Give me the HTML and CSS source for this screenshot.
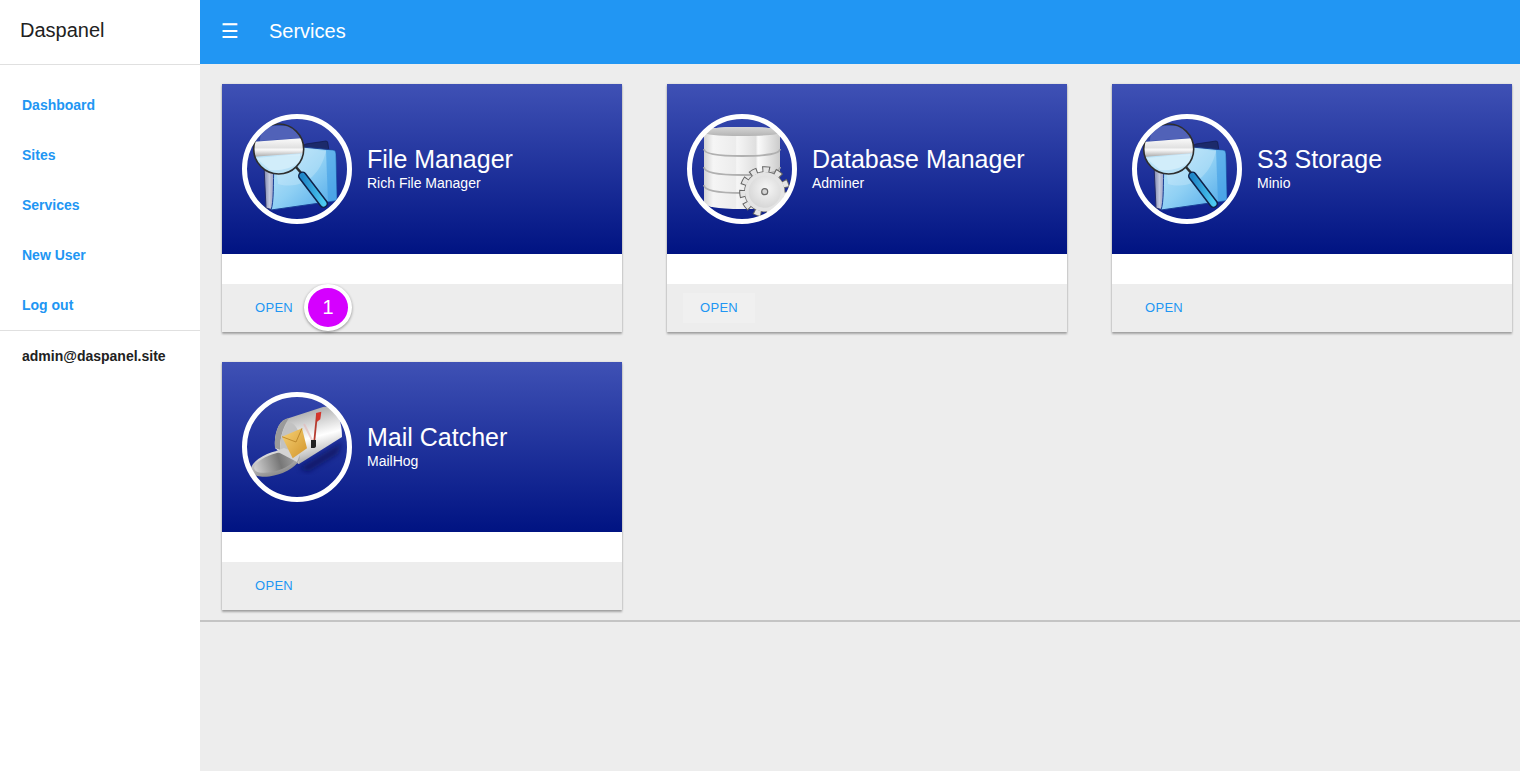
FILE: index.html
```html
<!DOCTYPE html>
<html lang="en">
<head>
<meta charset="utf-8">
<title>Services</title>
<link rel="stylesheet" href="styles.css">
</head>
<body>
<aside class="sidebar">
  <div class="brand">Daspanel</div>
  <nav class="nav">
    <a class="nav-link" href="#">Dashboard</a>
    <a class="nav-link" href="#">Sites</a>
    <a class="nav-link" href="#">Services</a>
    <a class="nav-link" href="#">New User</a>
    <a class="nav-link" href="#">Log out</a>
  </nav>
  <div class="user">admin@daspanel.site</div>
</aside>
<div class="main">
  <header class="topbar">
    <span class="burger">☰</span>
    <h1 class="page-title">Services</h1>
  </header>
  <section class="grid">
    <article class="card">
      <div class="card-head">
        <svg class="avatar" viewBox="0 0 110 110" width="110" height="110">
          <defs>
            <clipPath id="disc"><circle cx="55" cy="55" r="52"/></clipPath>
            <clipPath id="lens"><circle cx="36.7" cy="35" r="25"/></clipPath>
            <filter id="soft"><feGaussianBlur stdDeviation="2.5"/></filter>
            <linearGradient id="folder" x1="0" y1="0" x2="1" y2="1">
              <stop offset="0" stop-color="#c4e8fa"/><stop offset=".5" stop-color="#8fd0f4"/><stop offset="1" stop-color="#4aa5e8"/>
            </linearGradient>
            <linearGradient id="pages" x1="0" y1="0" x2="1" y2="0">
              <stop offset="0" stop-color="#7d83ad"/><stop offset=".5" stop-color="#c3c8dd"/><stop offset="1" stop-color="#8e94bb"/>
            </linearGradient>
            <linearGradient id="band" x1="0" y1="0" x2="0" y2="1">
              <stop offset="0" stop-color="#fbfbfb"/><stop offset=".5" stop-color="#e2e2e2"/><stop offset=".62" stop-color="#fafafa"/><stop offset="1" stop-color="#a8a8a8"/>
            </linearGradient>
            <linearGradient id="handle" x1="0" y1="0" x2="1" y2="0">
              <stop offset="0" stop-color="#1f86c8"/><stop offset="1" stop-color="#4cc8f0"/>
            </linearGradient>
            <linearGradient id="drum" x1="0" y1="0" x2="1" y2="0">
              <stop offset="0" stop-color="#d2d2d2"/><stop offset=".12" stop-color="#f5f5f5"/><stop offset=".42" stop-color="#ececec"/><stop offset=".43" stop-color="#f6f6f6"/><stop offset=".68" stop-color="#dfdfdf"/><stop offset=".71" stop-color="#fbfbfb"/><stop offset="1" stop-color="#cbcbcb"/>
            </linearGradient>
            <linearGradient id="drumtop" x1="0" y1="0" x2="0" y2="1">
              <stop offset="0" stop-color="#d6d6d6"/><stop offset="1" stop-color="#b4b4b4"/>
            </linearGradient>
            <radialGradient id="gearface" cx=".55" cy=".4" r=".7">
              <stop offset="0" stop-color="#f6f6f6"/><stop offset="1" stop-color="#d2d2d2"/>
            </radialGradient>
            <linearGradient id="box" x1=".35" y1="0" x2=".65" y2="1">
              <stop offset="0" stop-color="#9c9c9c"/><stop offset=".35" stop-color="#dcdcdc"/><stop offset=".55" stop-color="#ffffff"/><stop offset=".8" stop-color="#c8c8c8"/><stop offset="1" stop-color="#8d8d8d"/>
            </linearGradient>
            <linearGradient id="env" x1="0" y1="0" x2="1" y2="1">
              <stop offset="0" stop-color="#f7d276"/><stop offset="1" stop-color="#d2952b"/>
            </linearGradient>
            <linearGradient id="rim" x1="0" y1="0" x2="0" y2="1">
              <stop offset="0" stop-color="#dcdcdc"/><stop offset="1" stop-color="#8b8b8b"/>
            </linearGradient>
            <linearGradient id="tray" x1="0" y1="0" x2="1" y2="0">
              <stop offset="0" stop-color="#d2d2d2"/><stop offset=".6" stop-color="#777"/><stop offset="1" stop-color="#a5a5a5"/>
            </linearGradient>
            <g id="file-icon">
              <g clip-path="url(#disc)">
                <path d="M60 32 L64 30 L84 27 Q86 27 86 30 L87 37 L60 40Z" fill="#1c2a6b" stroke="#141d52" stroke-width=".8"/>
                <path d="M22 52 L33 52 L31 96 L24 94Z" fill="url(#pages)" stroke="#232b66" stroke-width="1"/>
                <path d="M29 96 C32 88 31 70 32 50 L60 33 L91 36 Q94 36 94 40 L95 84 Q95 87 92 87 Z" fill="url(#folder)" stroke="#1a3f96" stroke-width="1"/>
                <path d="M84 36 L91 36 Q94 36 94 40 L95 84 Q95 87 92 87 L86 88Z" fill="#3d9ae4" opacity=".55"/>
                <path d="M36 70 C58 76 78 64 84 37 L60 34 L34 52Z" fill="#def3fd" opacity=".3"/>
              </g>
              <path d="M54 53 L60 60" stroke="#2b2b2b" stroke-width="2.5"/>
              <path d="M60.5 62 L81.5 89.5" stroke="#0f2148" stroke-width="9" stroke-linecap="round"/>
              <path d="M60.5 62 L81.5 89.5" stroke="url(#handle)" stroke-width="6" stroke-linecap="round"/>
              <circle cx="36.7" cy="35" r="25" fill="#c4e4f6"/>
              <g clip-path="url(#lens)">
                <rect x="10" y="8" width="54" height="20" fill="#2f45a5"/>
                <path d="M18 27 Q18 13 32 12 H50 Q56 16 58 24Z" fill="#5162b8"/>
                <rect x="10" y="42" width="54" height="20" fill="#b9e2f7"/>
                <path d="M10 28 L62 24 V39 L10 43Z" fill="url(#band)"/>
                <path d="M14 44 L58 40 V48 Q44 58 28 56Z" fill="#e6f6fd" opacity=".55"/>
              </g>
              <circle cx="36.7" cy="35" r="25" fill="none" stroke="#2e2e2e" stroke-width="1.6"/>
            </g>
          </defs>
          <use href="#file-icon"/>
          <circle class="ring" cx="55" cy="55" r="52.5"/>
        </svg>
        <div class="card-text">
          <h2 class="card-title">File Manager</h2>
          <p class="card-sub">Rich File Manager</p>
        </div>
      </div>
      <div class="card-body"></div>
      <div class="card-actions">
        <a class="open-btn" href="#">Open</a>
        <span class="badge">1</span>
      </div>
    </article>

    <article class="card">
      <div class="card-head">
        <svg class="avatar" viewBox="0 0 110 110" width="110" height="110">
          <g clip-path="url(#disc)">
            <path d="M17 18 Q17 13 55 13 Q93 13 93 18 V88 Q93 95 55 95 Q17 95 17 88Z" fill="url(#drum)"/>
            <path d="M17 18 Q17 13 55 13 Q93 13 93 18 Q93 22 55 22 Q17 22 17 18Z" fill="url(#drumtop)"/>
            <path d="M17 35 Q17 42 55 42 Q93 42 93 35" class="db-line"/>
            <path d="M17 53 Q17 61 55 61 Q93 61 93 53" class="db-line"/>
            <path d="M17 71 Q17 79 55 79 Q93 79 93 71" class="db-line"/>
            <circle class="gear-teeth-dark" cx="77.7" cy="77.7" r="22"/>
            <circle class="gear-rim-dark" cx="77.7" cy="77.7" r="20.5"/>
            <circle class="gear-teeth" cx="77.7" cy="77.7" r="22"/>
            <circle class="gear-rim" cx="77.7" cy="77.7" r="19.8"/>
            <circle cx="77.7" cy="77.7" r="16" fill="url(#gearface)"/>
            <circle cx="77.7" cy="77.7" r="3" fill="#d4d4d4" stroke="#6a6a6a" stroke-width="1.2"/>
          </g>
          <circle class="ring" cx="55" cy="55" r="52.5"/>
        </svg>
        <div class="card-text">
          <h2 class="card-title">Database Manager</h2>
          <p class="card-sub">Adminer</p>
        </div>
      </div>
      <div class="card-body"></div>
      <div class="card-actions">
        <a class="open-btn open-btn-hover" href="#">Open</a>
      </div>
    </article>

    <article class="card">
      <div class="card-head">
        <svg class="avatar" viewBox="0 0 110 110" width="110" height="110">
          <use href="#file-icon"/>
          <circle class="ring" cx="55" cy="55" r="52.5"/>
        </svg>
        <div class="card-text">
          <h2 class="card-title">S3 Storage</h2>
          <p class="card-sub">Minio</p>
        </div>
      </div>
      <div class="card-body"></div>
      <div class="card-actions">
        <a class="open-btn" href="#">Open</a>
      </div>
    </article>

    <article class="card">
      <div class="card-head">
        <svg class="avatar" viewBox="0 0 110 110" width="110" height="110">
          <path d="M57 76 L100 50 L96 62 L66 80Z" fill="#07104f" opacity=".6" filter="url(#soft)"/>
          <path d="M33 56 C32 42 36 30 44 27 L81 15 C94 12 100 28 100 45 L57 72 L48 68Z" fill="url(#box)"/>
          <path d="M33 56 C32 42 36 30 44 27 L47 26 C43 32 38 42 38 58Z" fill="#9a9a9a"/>
          <path d="M38 58 C38 44 42 33 47 30 C53 31 57 38 58 46 L57 72 L50 66Z" fill="#c2c2c2"/>
          <ellipse cx="33.3" cy="71.3" rx="25.5" ry="11.5" fill="url(#rim)" transform="rotate(-18 33.3 71.3)"/>
          <ellipse cx="33.3" cy="70.3" rx="22" ry="8.5" fill="url(#tray)" transform="rotate(-18 33.3 70.3)"/>
          <path d="M34 59 L42 56 L58 62 L55 70Z" fill="#d4d4d4"/>
          <path d="M40 44.7 L60 36.3 L65 56.3 L50.7 66.3Z" fill="url(#env)"/>
          <path d="M40 44.7 L54 50 L60 36.3" fill="none" stroke="#b57f22" stroke-width=".8"/>
          <path d="M62 32 L71 50" stroke="#e3b8b8" stroke-width="2" opacity=".6"/>
          <path d="M72 52 L75 22" stroke="#b53b2f" stroke-width="1.8"/>
          <path d="M74 21 L79.3 19.7 L78.3 27.3 L75 29.7Z" fill="#d6342a"/>
          <path d="M69 48 H74 V54 Q74 56 71 56 H69Z" fill="#222"/>
          <circle class="ring" cx="55" cy="55" r="52.5"/>
        </svg>
        <div class="card-text">
          <h2 class="card-title">Mail Catcher</h2>
          <p class="card-sub">MailHog</p>
        </div>
      </div>
      <div class="card-body"></div>
      <div class="card-actions">
        <a class="open-btn" href="#">Open</a>
      </div>
    </article>
  </section>
</div>
</body>
</html>
```

FILE: styles.css
```css
* { box-sizing: border-box; }
html, body { height: 100%; }
body {
  margin: 0;
  display: flex;
  overflow: hidden;
  background: #ededed;
  font-family: "Liberation Sans", Arial, sans-serif;
  color: #212121;
}
a { text-decoration: none; }
.sidebar {
  width: 200px;
  flex: none;
  background: #fff;
}
.brand {
  height: 65px;
  padding-left: 20px;
  display: flex;
  align-items: center;
  padding-bottom: 4px;
  font-size: 20px;
  border-bottom: 1px solid #e0e0e0;
}
.nav {
  padding-top: 15px;
  border-bottom: 1px solid #e0e0e0;
}
.nav-link {
  display: flex;
  align-items: center;
  height: 50px;
  padding-left: 22px;
  font-size: 14px;
  font-weight: 700;
  color: #2196f3;
}
.user {
  padding: 17px 22px;
  font-size: 14px;
  font-weight: 700;
}
.main {
  flex: 1;
  min-width: 0;
}
.topbar {
  height: 64px;
  display: flex;
  align-items: center;
  padding-left: 21px;
  padding-bottom: 2px;
  background: #2196f3;
  color: #fff;
}
.burger {
  width: 48px;
  font-size: 20px;
  font-family: "DejaVu Sans", sans-serif;
}
.page-title {
  margin: 0;
  font-size: 20px;
  font-weight: 400;
}
.grid {
  display: flex;
  flex-wrap: wrap;
  gap: 30px 45px;
  padding: 20px 0 10px 22px;
  border-bottom: 2px solid #c4c4c4;
}
.card {
  width: 400px;
  background: #fff;
  box-shadow: 0 2px 2px rgba(0, 0, 0, .3), 0 0 2px rgba(0, 0, 0, .12);
}
.card-head {
  height: 170px;
  padding: 30px 20px;
  display: flex;
  align-items: center;
  gap: 15px;
  background: linear-gradient(#3f51b5, #001382);
  color: #fff;
}
.avatar { display: block; flex: none; }
.ring { fill: none; stroke: #fff; stroke-width: 5; }
.db-line { fill: none; stroke: #b0b0b0; stroke-width: 1.8; }
.gear-teeth-dark { fill: none; stroke: #666; stroke-width: 7; stroke-dasharray: 7.57 5; }
.gear-rim-dark { fill: #666; }
.gear-teeth { fill: none; stroke: #e4e4e4; stroke-width: 5; stroke-dasharray: 5.57 7; stroke-dashoffset: -1; }
.gear-rim { fill: #e4e4e4; }
.card-title {
  margin: 0;
  font-size: 25px;
  font-weight: 400;
  line-height: 32px;
}
.card-sub {
  margin: 0;
  font-size: 14px;
  line-height: 16px;
}
.card-text { padding-bottom: 4px; }
.card-body { height: 30px; }
.card-actions {
  position: relative;
  height: 48px;
  padding: 9px 16px;
  background: #ededed;
}
.open-btn {
  display: inline-flex;
  align-items: center;
  height: 30px;
  padding: 0 17px 2px;
  font-size: 13px;
  letter-spacing: .3px;
  text-transform: uppercase;
  color: #2196f3;
}
.open-btn-hover { background: #f0f0f0; }
.badge {
  position: absolute;
  left: 82px;
  top: 0;
  width: 48px;
  height: 47px;
  display: flex;
  align-items: center;
  justify-content: center;
  border: 4px solid #fff;
  border-radius: 50%;
  background: #d500ff;
  color: #fff;
  font-size: 20px;
  box-shadow: 0 1px 3px rgba(0, 0, 0, .4);
}
```
